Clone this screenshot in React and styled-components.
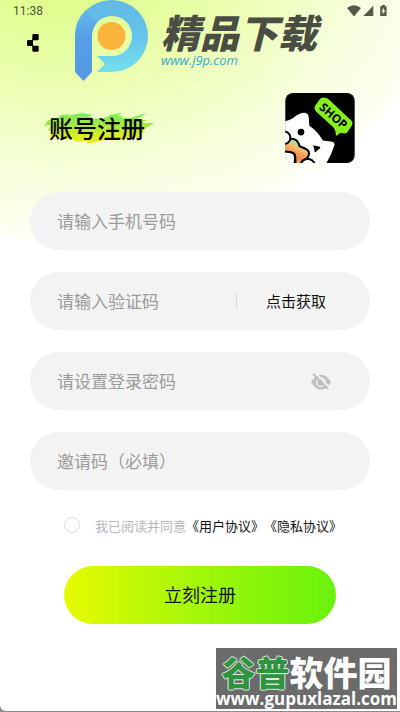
import React, { useState } from 'react'
import styled, { createGlobalStyle } from 'styled-components';

const fields = {
    phone : '请输入手机号码',
    code : '请输入验证码',
    password : '请设置登录密码',
    invite : '邀请码（必填）',
}

const StatusIcons = () => (
    <svg width="40" height="12" viewBox="0 0 40 12" fill="#555a4a" aria-hidden="true">
        <path d="M0 3 Q7 -2.4 14 3 L7 11.4 Z" />
        <path d="M26.3 .8 V11 H16.3 Z" />
        <path d="M35 0 h3 v1.2 h1.6 v9.9 h-6.4 V1.2 H35 Z" />
        <path d="M37.2 2.6 L34.4 6.6 H36.1 L35.6 9.6 L38.4 5.6 H36.7 Z" fill="#fafff0" />
    </svg>
)

const ShareIcon = () => (
    <svg width="12" height="18" viewBox="80 102 36 54" aria-hidden="true">
        <g fill="#000">
            <rect x="96" y="102" width="19" height="19" rx="3" />
            <rect x="80" y="120" width="18" height="18" rx="3" />
            <rect x="96" y="137" width="19" height="18" rx="3" />
            <path d="M92 122 L99 115 V121 L96 125 V133 L99 137 V143 L92 136 Z" />
        </g>
    </svg>
)

const BrandMark = () => (
    <svg width="74" height="82" viewBox="75 0 74 82" aria-hidden="true">
        <defs>
            <linearGradient id="ring" x1="0" y1="0" x2="0" y2="1">
                <stop offset="0" stopColor="#62b8e6" />
                <stop offset=".5" stopColor="#66c3ea" />
                <stop offset="1" stopColor="#76dff0" />
            </linearGradient>
            <linearGradient id="stem" x1="0" y1="0" x2="0" y2="1">
                <stop offset="0" stopColor="#62b8e6" />
                <stop offset=".4" stopColor="#569fe6" />
                <stop offset="1" stopColor="#5597e4" />
            </linearGradient>
        </defs>
        <path d="M84 40 L75 36 A36.500 36 0 0 1 148 36 A36 36 0 0 1 112 72 H97 L105 64 L97 56 H112 A20 20 0 0 0 132 36 A20 20 0 0 0 92 36 Z" fill="url(#ring)" />
        <path d="M75 36 Q75 20 86 10 L97 22 Q92 28 92 36 V72 L83.500 81 L75 72 Z" fill="url(#stem)" />
        <circle cx="111.500" cy="36" r="14" fill="#fbb43c" />
    </svg>
)

const BrushStroke = () => (
    <svg width="110" height="32" viewBox="0 0 110 32" aria-hidden="true">
        <defs>
            <linearGradient id="paint" x1="0" y1="0" x2="0" y2="1">
                <stop offset="0" stopColor="#7aea5c" />
                <stop offset=".4" stopColor="#a4ea40" />
                <stop offset=".75" stopColor="#d8ee24" />
                <stop offset="1" stopColor="#f4e62c" />
            </linearGradient>
        </defs>
        <path
            d="M0 14 L4 8 L11 8 L17 3 L27 2 L23 4 L38 1 L49 3 L44 5 L48 5 L46 7 L60 6 L67 3 L78 1 L73 4 L80 4 L75 6 L86 6 L102 1 L97 5 L91 8 L103 8 L98 11 L110 11 L104 15 L99 18 L101 20 L94 23 L97 26 L86 26 L78 28 L68 27 L60 28 L53 30 L42 32 L44 29 L36 30 L29 29 L30 27 L20 27 L22 25 L10 25 L5 25 L8 20 L4 18 L7 13 Z"
            fill="url(#paint)"
        />
    </svg>
)

const ShopIcon = () => (
    <svg width="70" height="70" viewBox="48 40 207 208" role="img" aria-label="SHOP">
        <defs>
            <clipPath id="tile">
                <rect x="48" y="40" width="207" height="208" rx="24" />
            </clipPath>
            <linearGradient id="rainbow" gradientUnits="userSpaceOnUse" x1="100" y1="180" x2="72" y2="240">
                <stop offset="0" stopColor="#6fd8b4" />
                <stop offset=".25" stopColor="#b8dc94" />
                <stop offset=".45" stopColor="#f7b868" />
                <stop offset=".8" stopColor="#f5844a" />
                <stop offset="1" stopColor="#f5a06a" />
            </linearGradient>
        </defs>
        <g clipPath="url(#tile)">
            <rect x="48" y="40" width="207" height="208" fill="#000" />
            <path d="M40 126 Q58 122 72 114 Q90 99 106 99 Q117 100 118 112 L120 137 Q146 155 160 181 L188 185 Q198 188 193 199 Q184 228 168 252 H40 Z" fill="#fff" />
            <circle cx="95" cy="156" r="10" />
            <path d="M131 195 L151 200 Q155 204 148 207 L138 216 Q134 216 135 209 Z" />
            <path d="M44 190 Q58 188 63 177 Q72 173 82 181 Q88 188 91 198 L107 205 Q122 212 118 225 Q115 235 106 238 Q97 242 94 252 H78 Q80 234 76 222 Q70 214 44 215 Z" fill="url(#rainbow)" stroke="#000" strokeWidth="6" />
            <path d="M44 154 Q66 157 63 177 Q60 190 44 192 Z" fill="#fff" stroke="#000" strokeWidth="6" />
            <path d="M44 215 Q72 213 76 225 Q79 236 75 252 H44 Z" fill="#fff" stroke="#000" strokeWidth="6" />
            <path d="M94 252 Q98 238 112 236 Q128 234 136 250" fill="#fff" stroke="#000" strokeWidth="6" />
            <path d="M166 54 Q154 52 150 60 L137 78 Q132 89 142 97 L191 142 Q198 149 199 168 L213 158 Q226 163 232 157 L246 137 Q252 126 241 119 L178 59 Q172 54 166 54 Z" fill="#86f01c" />
            <text x="147" y="86" transform="rotate(41 147 86)" fontFamily="Open Sans, sans-serif" fontWeight="700" fontSize="35">SHOP</text>
        </g>
    </svg>
)

const EyeOffIcon = () => (
    <svg width="20" height="17" viewBox="303 368 60 50" aria-hidden="true">
        <path d="M303 395 Q317 373 333 373 Q350 373 363 395 Q350 417 333 417 Q317 417 303 395 Z" fill="#bfbfbf" />
        <circle cx="333" cy="395" r="13" fill="none" stroke="#f3f3f3" strokeWidth="4" />
        <path d="M316 368 L362 414" stroke="#f3f3f3" strokeWidth="5" />
        <path d="M309 370 L354 416" stroke="#bdbdbd" strokeWidth="5" />
    </svg>
)

export default function App() {
    const [values, setValues] = useState({ phone : '', code : '', password : '', invite : '' })
    const [agreed, setAgreed] = useState(false)
    const [visible, setVisible] = useState(false)

    const bind = name => ({
        name,
        placeholder : fields[name],
        'aria-label' : fields[name],
        value : values[name],
        onChange : e => setValues({ ...values, [name] : e.target.value }),
    })

    return (
        <Page>
            <GlobalStyle />
            <StatusBar>
                <span>11:38</span>
                <StatusIcons />
            </StatusBar>
            <Nav>
                <IconButton type="button" aria-label="分享">
                    <ShareIcon />
                </IconButton>
            </Nav>
            <Brand>
                <BrandMark />
                <BrandText>
                    <BrandName>精品下载</BrandName>
                    <BrandUrl>www.j9p.com</BrandUrl>
                </BrandText>
            </Brand>
            <Header>
                <Title>
                    <BrushStroke />
                    <span>账号注册</span>
                </Title>
                <ShopIcon />
            </Header>
            <Form onSubmit={e => e.preventDefault()}>
                <Field>
                    <Input type="tel" {...bind('phone')} />
                </Field>
                <Field>
                    <Input type="text" {...bind('code')} />
                    <Divider />
                    <CodeButton type="button">点击获取</CodeButton>
                </Field>
                <Field>
                    <Input type={visible ? 'text' : 'password'} {...bind('password')} />
                    <EyeButton type="button" aria-label="显示密码" onClick={() => setVisible(!visible)}>
                        <EyeOffIcon />
                    </EyeButton>
                </Field>
                <Field>
                    <Input type="text" {...bind('invite')} />
                </Field>
                <Agreement>
                    <Radio id="agree" type="checkbox" checked={agreed} onChange={e => setAgreed(e.target.checked)} />
                    <AgreeLabel htmlFor="agree">我已阅读并同意</AgreeLabel>
                    <Link href="#user">《用户协议》</Link>
                    <Link href="#privacy">《隐私协议》</Link>
                </Agreement>
                <Submit type="submit">立刻注册</Submit>
            </Form>
            <Stamp>
                <StampName><em>谷普</em>软件园</StampName>
                <StampUrl>www.gupuxlazal.com</StampUrl>
            </Stamp>
        </Page>
    )
}

const GlobalStyle = createGlobalStyle`
    * {
        box-sizing: border-box;
    }
    body {
        margin: 0;
        background: #8c8c8c;
        font-family: 'Noto Sans CJK SC', sans-serif;
    }
    button, input {
        font-family: inherit;
    }
    svg {
        display: block;
        flex: none;
    }
`;
const Page = styled.div`
    position: relative;
    min-height: calc(100vh - 1px);
    padding-bottom: 24px;
    overflow: hidden;
    border-radius: 0 0 0 6px;
    background: radial-gradient(ellipse 400px 300px at 60px -58px, #dcfb80 0%, #e0fd8e 20%, #e9feaa 42%, #f1ffc6 62%, #f8ffe0 80%, #fcfff2 98%, #fff 100%) no-repeat #fff;
`;
const StatusBar = styled.div`
    display: flex;
    align-items: center;
    justify-content: space-between;
    height: 22px;
    padding: 0 13px;
    color: #4c5440;
    font-family: Roboto, sans-serif;
    font-size: 12px;
`;
const Nav = styled.div`
    display: flex;
    align-items: center;
    height: 42px;
    padding: 0 19px;
`;
const IconButton = styled.button`
    display: flex;
    padding: 8px;
    border: 0;
    background: none;
    cursor: pointer;
`;
const Brand = styled.div`
    position: absolute;
    top: 0;
    left: 75px;
    display: flex;
    gap: 12px;
    pointer-events: none;
`;
const BrandText = styled.div`
    display: flex;
    flex-direction: column;
    padding-top: 10px;
`;
const BrandName = styled.span`
    color: #494d43;
    font-size: 39px;
    font-style: italic;
    font-weight: 900;
    line-height: 42px;
    white-space: nowrap;
`;
const BrandUrl = styled.span`
    color: #3ba9cf;
    font-family: 'Open Sans', sans-serif;
    font-size: 13px;
    font-style: italic;
    font-weight: 500;
    line-height: 16px;
`;
const Header = styled.header`
    display: flex;
    align-items: center;
    justify-content: space-between;
    padding: 29px 45px 29px 49px;
`;
const Title = styled.h1`
    position: relative;
    margin: 0;
    color: #000;
    font-size: 24px;
    font-weight: 500;
    line-height: 32px;

    svg {
        position: absolute;
        top: 0;
        left: -5px;
    }
    span {
        position: relative;
    }
`;
const Form = styled.form`
    display: flex;
    flex-direction: column;
    gap: 22px;
    padding: 0 30px;
`;
const Field = styled.div`
    display: flex;
    align-items: center;
    height: 58px;
    padding: 0 27px;
    border-radius: 29px;
    background: #f3f3f3;
`;
const Input = styled.input`
    flex: 1;
    min-width: 0;
    height: 100%;
    padding: 0 0 2px;
    border: 0;
    outline: 0;
    background: none;
    color: #222;
    font-size: 17px;

    &::placeholder {
        color: #9b9b9b;
        opacity: 1;
    }
`;
const Divider = styled.span`
    width: 1px;
    height: 16px;
    background: #dcdcdc;
`;
const CodeButton = styled.button`
    padding: 8px 17px 10px 29px;
    border: 0;
    background: none;
    color: #111;
    font-size: 15px;
    cursor: pointer;
`;
const EyeButton = styled.button`
    display: flex;
    padding: 8px 12px;
    border: 0;
    background: none;
    cursor: pointer;
`;
const Agreement = styled.div`
    display: flex;
    align-items: center;
    height: 26px;
    padding-left: 34px;
    font-size: 13px;
    white-space: nowrap;
`;
const Radio = styled.input`
    appearance: none;
    width: 16px;
    height: 16px;
    margin: 0 15px 0 0;
    border: 1px solid #dcdcdc;
    border-radius: 50%;
    background: #fff;

    &:checked {
        background: #8cf50e;
    }
`;
const AgreeLabel = styled.label`
    color: #b5b8bd;
`;
const Link = styled.a`
    color: #111;
    text-decoration: none;
`;
const Submit = styled.button`
    height: 58px;
    margin: 6px 34px 0;
    padding: 0 0 2px;
    border: 0;
    border-radius: 29px;
    background: linear-gradient(90deg, #e6fa00, #a8f708 45%, #68f20c);
    color: #111;
    font-size: 18px;
    cursor: pointer;
`;
const Stamp = styled.div`
    position: absolute;
    right: 3px;
    bottom: 2px;
    display: flex;
    flex-direction: column;
    align-items: center;
    padding-top: 8px;
    background: #6b6b6b;
    color: #fff;
    white-space: nowrap;
    pointer-events: none;
`;
const StampName = styled.span`
    font-size: 34px;
    font-weight: 900;
    line-height: 32px;

    em {
        color: #2f9440;
        font-style: normal;
        text-shadow: 1px 0 #dfe8df, -1px 0 #dfe8df, 0 1px #dfe8df, 0 -1px #dfe8df;
    }
`;
const StampUrl = styled.span`
    font-family: 'Open Sans', sans-serif;
    font-size: 17px;
    font-weight: 700;
    line-height: 21px;
`;
